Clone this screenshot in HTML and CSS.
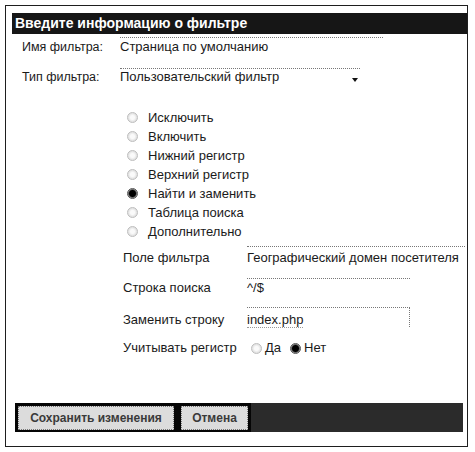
FILE: index.html
```html
<!DOCTYPE html>
<html lang="ru">
<head>
<meta charset="utf-8">
<title>Фильтр</title>
<link rel="stylesheet" href="styles.css">
</head>
<body>
<div class="panel">
  <div class="head">Введите информацию о фильтре</div>

  <div class="row row-name">
    <div class="lbl">Имя фильтра:</div>
    <div class="field f-name">Страница по умолчанию</div>
  </div>
  <div class="row row-type">
    <div class="lbl">Тип фильтра:</div>
    <div class="field f-type"><span>Пользовательский фильтр</span><span class="arrow"></span></div>
  </div>

  <ul class="radios">
    <li><span class="rd"></span>Исключить</li>
    <li><span class="rd"></span>Включить</li>
    <li><span class="rd"></span>Нижний регистр</li>
    <li><span class="rd"></span>Верхний регистр</li>
    <li><span class="rd on"></span>Найти и заменить</li>
    <li><span class="rd"></span>Таблица поиска</li>
    <li><span class="rd"></span>Дополнительно</li>
  </ul>

  <div class="sub sub-1">
    <div class="lbl">Поле фильтра</div>
    <div class="field f-field">Географический домен посетителя</div>
  </div>
  <div class="sub sub-2">
    <div class="lbl">Строка поиска</div>
    <div class="field f-box f-search">^/$</div>
  </div>
  <div class="sub sub-3">
    <div class="lbl">Заменить строку</div>
    <div class="field f-box f-repl"><span class="ul">index.php</span></div>
  </div>
  <div class="sub sub-4">
    <div class="lbl">Учитывать регистр</div>
    <div class="case">
      <span class="opt"><span class="rd"></span>Да</span>
      <span class="opt"><span class="rd on"></span>Нет</span>
    </div>
  </div>

  <div class="foot">
    <div class="btns">
      <button class="btn btn-save">Сохранить изменения</button>
      <button class="btn btn-cancel">Отмена</button>
    </div>
  </div>
</div>
</body>
</html>
```

FILE: styles.css
```css
* { box-sizing: border-box; }
html, body { margin: 0; padding: 0; background: #fff; }
body {
  font-family: "Liberation Sans", Arial, sans-serif;
  font-size: 13px;
  color: #1a1a1a;
}
.panel {
  margin: 5px 0 0 5px;
  width: 463px;
  height: 442px;
  border: 1px solid #1e1e1e;
  padding: 7px 0 0 6px;
  display: flex;
  flex-direction: column;
}
.head {
  height: 21px;
  line-height: 21px;
  background: #161616;
  color: #fff;
  font-weight: bold;
  font-size: 14px;
  padding-left: 3px;
}
.row {
  display: grid;
  grid-template-columns: 98px auto;
  align-items: end;
  padding-left: 10px;
  line-height: 14px;
}
.row .lbl { font-size: 12.5px; }
.field {
  border-top: 1px dotted #777;
  line-height: 14px;
}
.row-name { margin-top: 3px; }
.f-name { width: 263px; padding-top: 2px; }
.row-type { margin-top: 14px; }
.f-type {
  width: 240px;
  padding-top: 1px;
  display: flex;
  justify-content: space-between;
  align-items: center;
}
.arrow {
  width: 0; height: 0;
  margin: 6px 2px 0 0;
  border-left: 3px solid transparent;
  border-right: 3px solid transparent;
  border-top: 4px solid #111;
}
.radios {
  list-style: none;
  margin: 24px 0 0;
  padding: 0 0 0 115px;
}
.radios li {
  height: 19px;
  line-height: 19px;
  display: flex;
  align-items: center;
}
.rd {
  display: inline-block;
  width: 11px;
  height: 11px;
  border-radius: 50%;
  border: 1px solid #bdbdbd;
  background: radial-gradient(circle at 50% 50%, #fafafa 0 2px, #e4e4e4 4px);
  margin-right: 10px;
  flex: none;
}
.rd.on {
  border-color: #555;
  background: radial-gradient(circle, #000 0 3px, #666 4px, #ddd 5px);
}
.sub {
  display: grid;
  grid-template-columns: 124px auto;
  align-items: end;
  padding-left: 111px;
  line-height: 14px;
}
.sub-1 { margin-top: 5px; }
.f-field { width: 218px; padding-top: 4px; white-space: nowrap; }
.sub-2 { margin-top: 13px; }
.f-box { width: 163px; }
.f-search { padding-top: 2px; }
.sub-3 { margin-top: 12px; }
.f-repl { padding-top: 5px; border-right: 1px dotted #777; }
.ul { border-bottom: 1px dotted #999; }
.sub-4 { margin-top: 14px; }
.case { display: flex; align-items: center; padding-left: 4px; }
.opt { display: flex; align-items: center; margin-right: 9px; }
.opt .rd { margin-right: 3px; }
.foot {
  margin: auto 4px 14px 3px;
  height: 29px;
  background: #2b2b2b;
  display: flex;
}
.btns {
  background: #050505;
  padding: 3px 3px 2px;
  display: flex;
  gap: 7px;
}
.btn {
  height: 24px;
  border: 1px dotted #777;
  background: #dcdcdc;
  color: #3a3a3a;
  font-family: "Liberation Sans", Arial, sans-serif;
  font-weight: bold;
  font-size: 12px;
  padding: 0;
}
.btn-save { width: 156px; }
.btn-cancel { width: 67px; }
```
